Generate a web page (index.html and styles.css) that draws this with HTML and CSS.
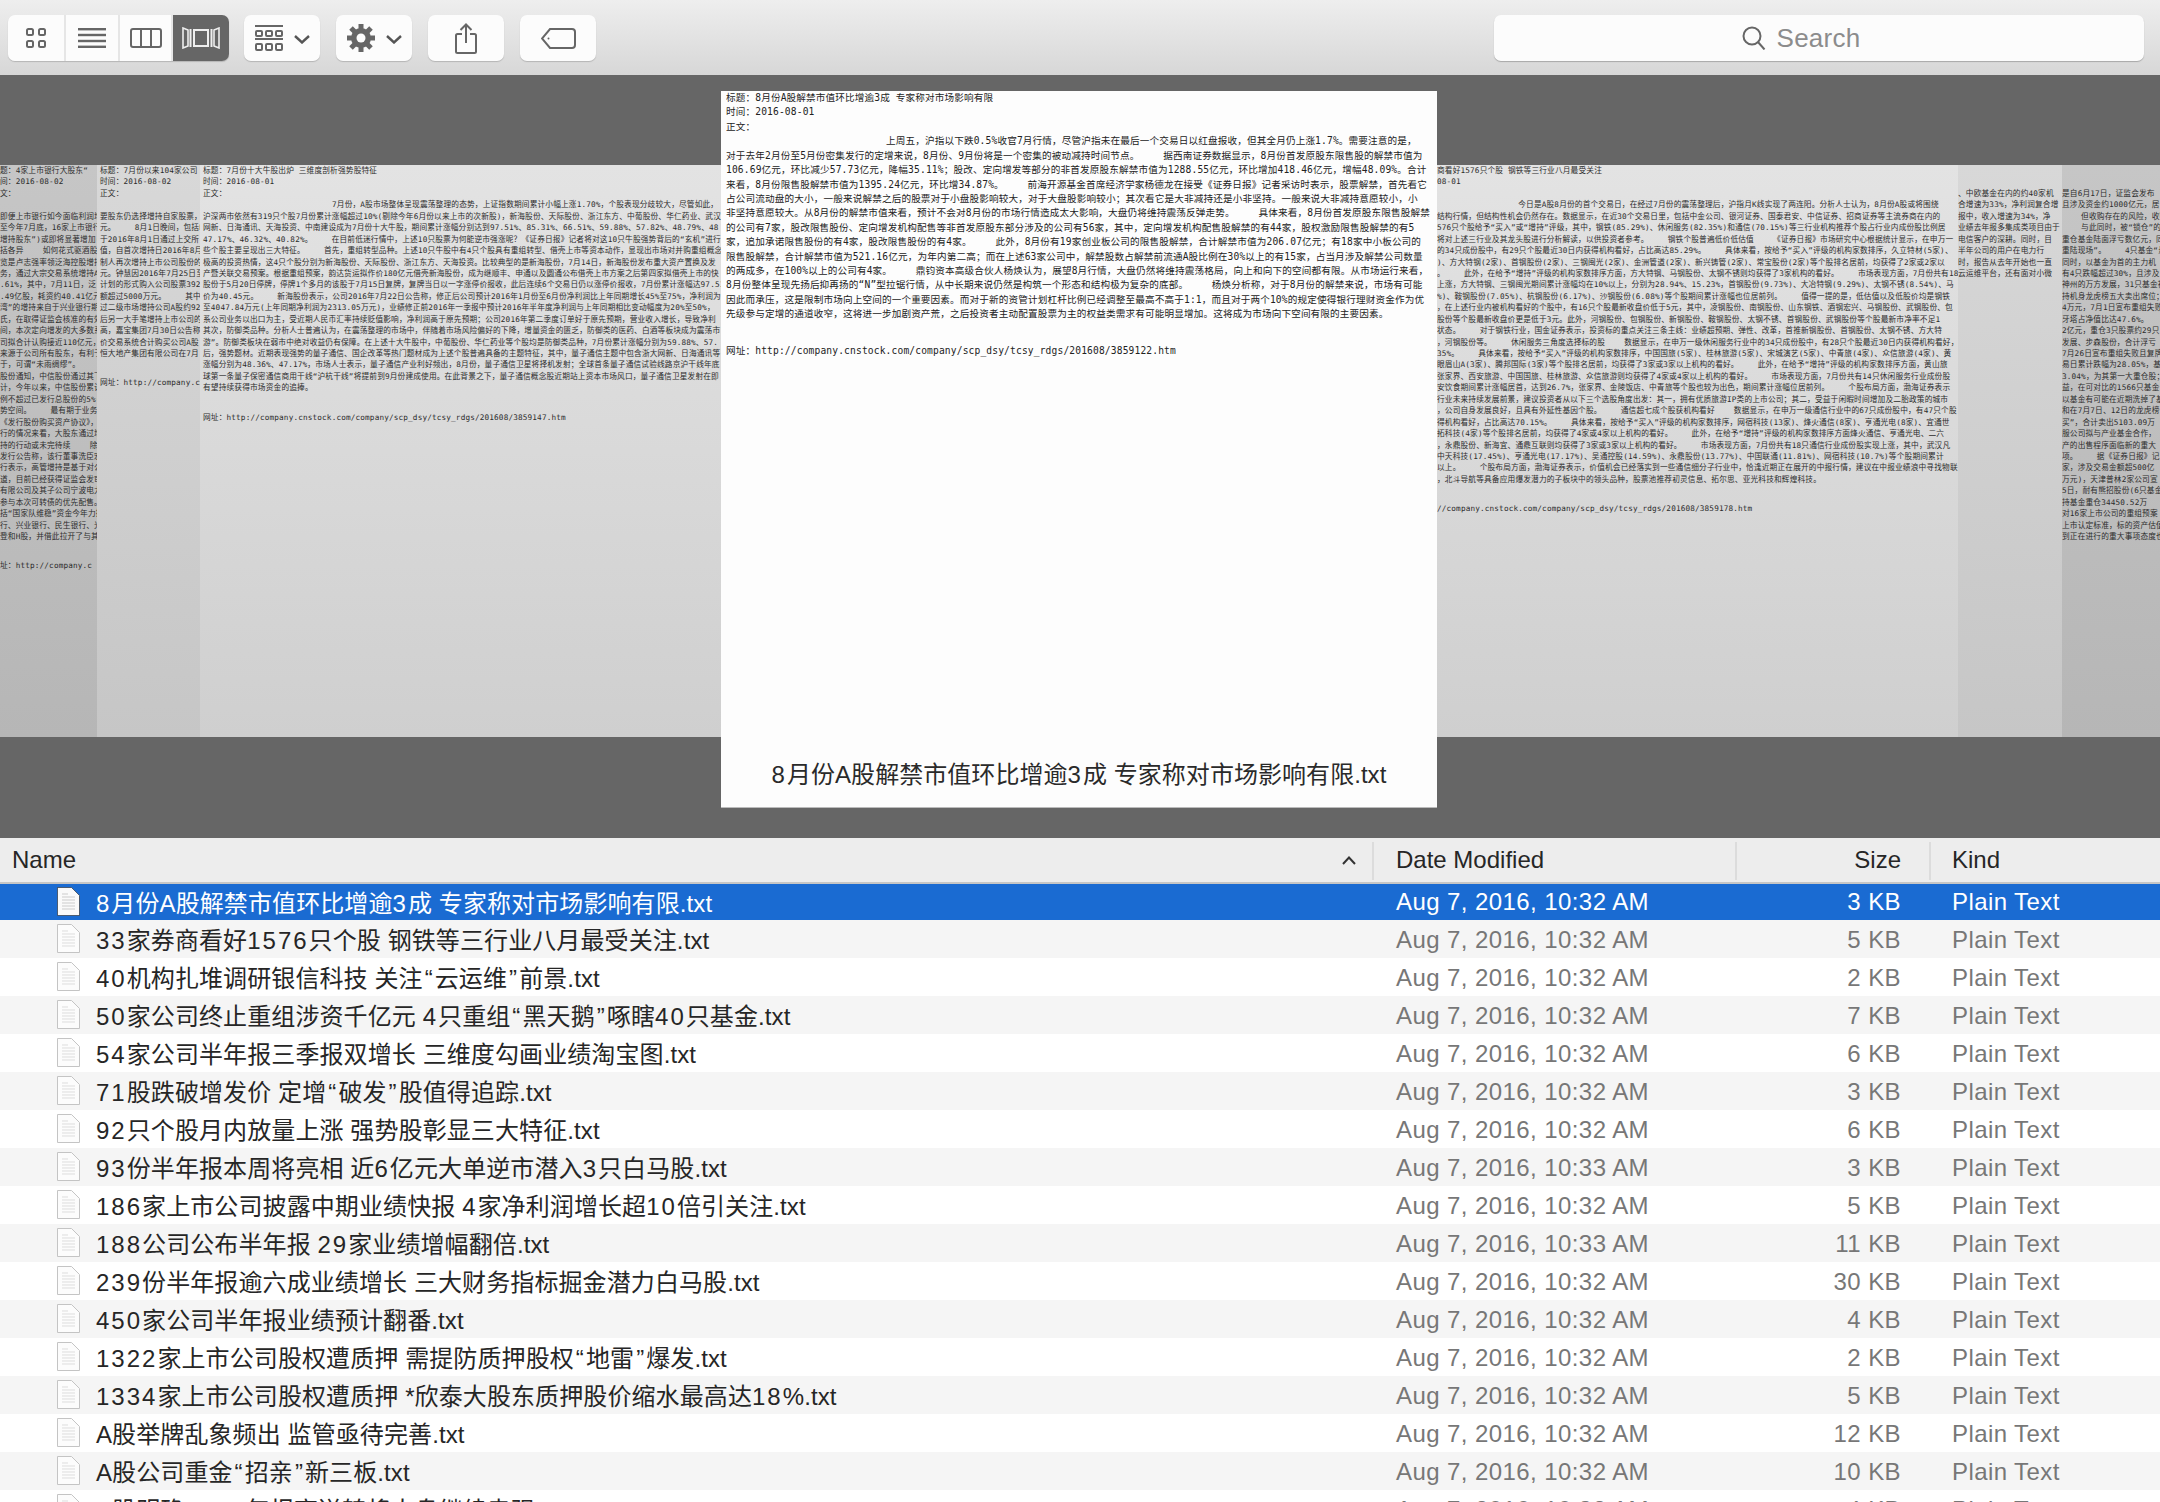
FILE: index.html
```html
<!DOCTYPE html>
<html lang="zh-CN">
<head>
<meta charset="utf-8">
<title>Finder</title>
<link rel="stylesheet" href="styles.css">
</head>
<body>
<svg class="defs" width="0" height="0"><defs><symbol id="doc" viewBox="0 0 23 29"><path d="M.5.500h14l8 8v20H.5z" fill="#fcfcfc" stroke="#c4c4c4"/><path d="M5 10h13M5 13h13M5 16h13M5 19h13M5 22h13M5 7h6" stroke="#ddd"/></symbol></defs></svg>
<div class="window">
  <header class="toolbar">
    <div class="seg">
      <div class="seg-btn w58"><svg width="20" height="20" viewBox="0 0 20 20" fill="none" stroke="#666" stroke-width="2"><rect x="1" y="1" width="6" height="6" rx="1.5"/><rect x="13" y="1" width="6" height="6" rx="1.5"/><rect x="1" y="13" width="6" height="6" rx="1.5"/><rect x="13" y="13" width="6" height="6" rx="1.5"/></svg></div>
      <div class="seg-btn w54"><svg width="28" height="20" viewBox="0 0 28 20" fill="#666"><rect y="0" width="28" height="2.4"/><rect y="5.8" width="28" height="2.4"/><rect y="11.8" width="28" height="2.4"/><rect y="17.6" width="28" height="2.4"/></svg></div>
      <div class="seg-btn w53"><svg width="32" height="20" viewBox="0 0 32 20" fill="none" stroke="#666" stroke-width="2"><rect x="1" y="1" width="30" height="18" rx="2"/><path d="M11 1v18M21 1v18"/></svg></div>
      <div class="seg-btn w56 on"><svg width="38" height="22" viewBox="0 0 38 22" fill="none" stroke="#eee" stroke-width="2"><rect x="12" y="3" width="14" height="16"/><path d="M1 1l5 2v16l-5 2zM37 1l-5 2v16l5 2z" stroke-width="1.6"/><path d="M8.500 2v18M29.500 2v18"/></svg></div>
    </div>
    <div class="btn">
      <svg width="28" height="26" viewBox="0 0 28 26" fill="none" stroke="#666" stroke-width="2"><path d="M0 1h28M0 14h28" /><rect x="1" y="6" width="6" height="5" rx="1"/><rect x="11" y="6" width="6" height="5" rx="1"/><rect x="21" y="6" width="6" height="5" rx="1"/><rect x="1" y="19" width="6" height="6" rx="1"/><rect x="11" y="19" width="6" height="6" rx="1"/><rect x="21" y="19" width="6" height="6" rx="1"/></svg>
      <svg class="chev" width="16" height="9" viewBox="0 0 16 9" fill="none" stroke="#555" stroke-width="2.4"><path d="M1 1l7 6.500 7-6.500"/></svg>
    </div>
    <div class="btn">
      <svg width="28" height="28" viewBox="0 0 28 28"><g stroke="#666" stroke-width="5"><path d="M14 0v28M0 14h28M4 4l20 20M24 4L4 24"/></g><circle cx="14" cy="14" r="10" fill="#666"/><circle cx="14" cy="14" r="4.500" fill="#fcfcfc"/></svg>
      <svg class="chev" width="16" height="9" viewBox="0 0 16 9" fill="none" stroke="#555" stroke-width="2.4"><path d="M1 1l7 6.500 7-6.500"/></svg>
    </div>
    <div class="btn"><svg width="22" height="31" viewBox="0 0 22 31" fill="none" stroke="#666" stroke-width="2"><path d="M7 11H2.500A1.500 1.500 0 0 0 1 12.500v16A1.500 1.500 0 0 0 2.500 30h17a1.500 1.500 0 0 0 1.500-1.500v-16a1.500 1.500 0 0 0-1.500-1.500H15"/><path d="M11 20V1.500M5.500 7L11 1.500 16.500 7"/></svg></div>
    <div class="btn"><svg width="35" height="21" viewBox="0 0 35 21" fill="none" stroke="#666" stroke-width="2"><path d="M9 1h22a3 3 0 0 1 3 3v13a3 3 0 0 1-3 3H9L1 10.500z"/><circle cx="7.500" cy="10.500" r="1" fill="#666" stroke="none"/></svg></div>
    <div class="search">
      <svg width="24" height="24" viewBox="0 0 24 24" fill="none" stroke="#666" stroke-width="2"><circle cx="10" cy="10" r="8.500"/><path d="M16 16l6.500 7.500"/></svg>
      <span>Search</span>
    </div>
  </header>

  <section class="preview">
<div class="pane pane-c1"><pre class="doc">题&#xFF1A;4家上市银行大股东“
间&#xFF1A;2016-08-02
文&#xFF1A;

即便上市银行如今面临利润增
至今年7月底&#xFF0C;16家上市银行
增持股东”)或即将显著增加(
括各异    如何花式驱酒股份
览是卢志强率领泛海控股增持
务&#xFF0C;通过大宗交易系统增持A
.61%&#xFF0C;其中&#xFF0C;7月11日&#xFF0C;泛
.49亿股&#xFF0C;耗资约40.41亿元
湾”的增持来自于兴业银行期
氏&#xFF0C;在取得证监会核准的有效
间&#xFF0C;本次定向增发的大多数系
司拟合计认购接近110亿元&#xFF0C;
来源于公司所有股东&#xFF0C;有利于
于&#xFF0C;可谓“未雨绸缪”。    前
股份通知&#xFF0C;中信股份通过其下
计&#xFF0C;今年以来&#xFF0C;中信股份累计
例不超过已发行总股份的5%(
势空间。    最有期于业务整
《发行股份购买资产协议》&#xFF0C;
行的情况来看&#xFF0C;大股东通过增
持的行动或未完待续    除了
发行公告称&#xFF0C;该行董事洗臣宏
行表示&#xFF0C;高管增持是基于对公
道&#xFF0C;目前已经获得证监会发审
有限公司及其子公司宁波电力
参与本次可转债的优先配售。
括“国家队维稳”资金今年力挺
行、兴业银行、民生银行、光
登和H股&#xFF0C;并借此拉开了与其</pre><pre class="doc url">址&#xFF1A;http://company.c</pre></div>
<div class="pane pane-b1 inset"><pre class="doc">标题&#xFF1A;7月份以来104家公司
时间&#xFF1A;2016-08-02
正文&#xFF1A;

要股东仍选择增持自家股票&#xFF0C;
元。    8月1日晚间&#xFF0C;包括B
于2016年8月1日通过上交所
值&#xFF0C;自首次增持日2016年8月
制人再次增持上市公司股份的
元。钟慧因2016年7月25日至
计划的形式购入公司股票392
额超过5000万元。    其中
过二级市场增持公司A股约92
后另一大手笔增持上市公司的
高&#xFF0C;嘉宝集团7月30日公告称
价交易系统合计购买公司A股
恒大地产集团有限公司在7月</pre><pre class="doc url">网址&#xFF1A;http://company.c</pre></div>
<div class="pane pane-a1 inset"><pre class="doc">标题&#xFF1A;7月份十大牛股出炉 三维度剖析强势股特征
时间&#xFF1A;2016-08-01
正文&#xFF1A;
                           7月份&#xFF0C;A股市场整体呈现震荡整理的态势&#xFF0C;上证指数期间累计小幅上涨1.70%&#xFF0C;个股表现分歧较大&#xFF0C;尽管如此&#xFF0C;
沪深两市依然有319只个股7月份累计涨幅超过10%(剔除今年6月份以来上市的次新股)&#xFF0C;新海股份、天际股份、浙江东方、中葡股份、华仁药业、武汉
网新、日海通讯、天海投资、中南建设成为7月份十大牛股&#xFF0C;期间累计涨幅分别达到97.51%、85.31%、66.51%、59.88%、57.82%、48.79%、48
47.17%、46.32%、40.82%。    在目前低迷行情中&#xFF0C;上述10只股票为何能逆市强涨呢&#xFF1F;《证券日报》记者将对这10只牛股强势背后的“玄机”进行
些个股主要呈现出三大特征。    首先&#xFF0C;重组转型品种。上述10只牛股中有4只个股具有重组转型、借壳上市等资本动作&#xFF0C;显现出市场对并购重组概念
极高的投资热情&#xFF0C;这4只个股分别为新海股份、天际股份、浙江东方、天海投资。比较典型的是新海股份&#xFF0C;7月14日&#xFF0C;新海股份发布重大资产置换及发
产暨关联交易预案。根据重组预案&#xFF0C;韵达货运拟作价180亿元借壳新海股份&#xFF0C;成为继顺丰、申通以及圆通公布借壳上市方案之后第四家拟借壳上市的快
股份于5月20日停牌&#xFF0C;停牌1个多月的该股于7月15日复牌&#xFF0C;复牌当日以一字涨停价报收&#xFF0C;此后连续6个交易日仍以涨停价报收&#xFF0C;7月份累计涨幅达97.51
价为40.45元。    新海股份表示&#xFF0C;公司2016年7月22日公告称&#xFF0C;修正后公司预计2016年1月份至6月份净利润比上年同期增长45%至75%&#xFF0C;净利润为
至4047.84万元(上年同期净利润为2313.05万元)&#xFF0C;业绩修正前2016年一季报中预计2016年半年度净利润与上年同期相比变动幅度为20%至50%&#xFF0C;
系公司业务以出口为主&#xFF0C;受近期人民币汇率持续贬值影响&#xFF0C;净利润高于原先预期&#xFF1B;公司2016年第二季度订单好于原先预期&#xFF0C;营业收入增长&#xFF0C;导致净利
其次&#xFF0C;防御类品种。分析人士普遍认为&#xFF0C;在震荡整理的市场中&#xFF0C;伴随着市场风险偏好的下降&#xFF0C;增量资金的匮乏&#xFF0C;防御类的医药、白酒等板块成为震荡市
游”。防御类板块在弱市中绝对收益仍有保障。在上述十大牛股中&#xFF0C;中葡股份、华仁药业等个股均是防御类品种&#xFF0C;7月份累计涨幅分别为59.88%、57.
后&#xFF0C;强势题材。近期表现强势的量子通信、国企改革等热门题材成为上述个股普遍具备的主题特征&#xFF0C;其中&#xFF0C;量子通信主题中包含浙大网新、日海通讯等
涨幅分别为48.36%、47.17%&#xFF0C;市场人士表示&#xFF0C;量子通信产业利好频出&#xFF0C;8月份&#xFF0C;量子通信卫星将择机发射&#xFF1B;全球首条量子通信试验线路京沪干线年底
球第一条量子保密通信商用干线“沪杭干线”将提前到9月份建成使用。在此背景之下&#xFF0C;量子通信概念股近期站上资本市场风口&#xFF0C;量子通信卫星发射在即
有望持续获得市场资金的追捧。</pre><pre class="doc url">网址&#xFF1A;http://company.cnstock.com/company/scp_dsy/tcsy_rdgs/201608/3859147.htm</pre></div>

<article class="card">
<pre class="doc-main">标题&#xFF1A;8月份A股解禁市值环比增逾3成 专家称对市场影响有限
时间&#xFF1A;2016-08-01
正文&#xFF1A;
                           上周五&#xFF0C;沪指以下跌0.5%收官7月行情&#xFF0C;尽管沪指未在最后一个交易日以红盘报收&#xFF0C;但其全月仍上涨1.7%。需要注意的是&#xFF0C;
对于去年2月份至5月份密集发行的定增来说&#xFF0C;8月份、9月份将是一个密集的被动减持时间节点。    据西南证券数据显示&#xFF0C;8月份首发原股东限售股的解禁市值为
106.69亿元&#xFF0C;环比减少57.73亿元&#xFF0C;降幅35.11%&#xFF1B;股改、定向增发等部分的非首发原股东解禁市值为1288.55亿元&#xFF0C;环比增加418.46亿元&#xFF0C;增幅48.09%。合计
来看&#xFF0C;8月份限售股解禁市值为1395.24亿元&#xFF0C;环比增34.87%。    前海开源基金首席经济学家杨德龙在接受《证券日报》记者采访时表示&#xFF0C;股票解禁&#xFF0C;首先看它
占公司流动盘的大小&#xFF0C;一般来说解禁之后的股票对于小盘股影响较大&#xFF0C;对于大盘股影响较小&#xFF1B;其次看它是大非减持还是小非坚持。一般来说大非减持意愿较小&#xFF0C;小
非坚持意愿较大。从8月份的解禁市值来看&#xFF0C;预计不会对8月份的市场行情造成太大影响&#xFF0C;大盘仍将维持震荡反弹走势。    具体来看&#xFF0C;8月份首发原股东限售股解禁
的公司有7家&#xFF0C;股改限售股份、定向增发机构配售等非首发原股东部分涉及的公司有56家&#xFF0C;其中&#xFF0C;定向增发机构配售股解禁的有44家&#xFF0C;股权激励限售股解禁的有5
家&#xFF0C;追加承诺限售股份的有4家&#xFF0C;股改限售股份的有4家。    此外&#xFF0C;8月份有19家创业板公司的限售股解禁&#xFF0C;合计解禁市值为206.07亿元&#xFF1B;有18家中小板公司的
限售股解禁&#xFF0C;合计解禁市值为521.16亿元&#xFF0C;为年内第二高&#xFF1B;而在上述63家公司中&#xFF0C;解禁股数占解禁前流通A股比例在30%以上的有15家&#xFF0C;占当月涉及解禁公司数量
的两成多&#xFF0C;在100%以上的公司有4家。    鼎钧资本高级合伙人杨焕认为&#xFF0C;展望8月行情&#xFF0C;大盘仍然将维持震荡格局&#xFF0C;向上和向下的空间都有限。从市场运行来看&#xFF0C;
8月份整体呈现先扬后抑再扬的“N”型拉锯行情&#xFF0C;从中长期来说仍然是构筑一个形态和结构极为复杂的底部。    杨焕分析称&#xFF0C;对于8月份的解禁来说&#xFF0C;市场有可能
因此而承压&#xFF0C;这是限制市场向上空间的一个重要因素。而对于新的资管计划杠杆比例已经调整至最高不高于1:1&#xFF0C;而且对于两个10%的规定使得银行理财资金作为优
先级参与定增的通道收窄&#xFF0C;这将进一步加剧资产荒&#xFF0C;之后投资者主动配置股票为主的权益类需求有可能明显增加。这将成为市场向下空间有限的主要因素。</pre>
<pre class="doc-main url-main">网址&#xFF1A;http://company.cnstock.com/company/scp_dsy/tcsy_rdgs/201608/3859122.htm</pre>
<p class="caption"><span class="n">8</span>月份A股解禁市值环比增逾<span class="n">3</span>成 专家称对市场影响有限.txt</p>
</article>

<div class="pane pane-a2"><pre class="doc">商看好1576只个股 钢铁等三行业八月最受关注
08-01

                 今日是A股8月份的首个交易日&#xFF0C;在经过7月份的震荡整理后&#xFF0C;沪指月K线实现了两连阳。分析人士认为&#xFF0C;8月份A股或将围绕
结构行情&#xFF0C;但结构性机会仍然存在。数据显示&#xFF0C;在近30个交易日里&#xFF0C;包括中金公司、银河证券、国泰君安、中信证券、招商证券等主流券商在内的
576只个股给予“买入”或“增持”评级&#xFF0C;其中&#xFF0C;钢铁(85.29%)、休闲服务(82.35%)和通信(70.15%)等三行业机构推荐个股占行业内成份股比例居
将对上述三行业及其龙头股进行分析解读&#xFF0C;以供投资者参考。    钢铁个股普遍低价低估值    《证券日报》市场研究中心根据统计显示&#xFF0C;在申万一
的34只成份股中&#xFF0C;有29只个股最近30日内获得机构看好&#xFF0C;占比高达85.29%。    具体来看&#xFF0C;按给予“买入”评级的机构家数排序&#xFF0C;久立特材(5家)、
)、方大特钢(2家)、首钢股份(2家)、三钢闽光(2家)、金洲管道(2家)、新兴铸管(2家)、常宝股份(2家)等个股排名居前&#xFF0C;均获得了2家或2家以
。    此外&#xFF0C;在给予“增持”评级的机构家数排序方面&#xFF0C;方大特钢、马钢股份、太钢不锈则均获得了3家机构的看好。    市场表现方面&#xFF0C;7月份共有18
上涨&#xFF0C;方大特钢、三钢闽光期间累计涨幅均在10%以上&#xFF0C;分别为28.94%、15.23%&#xFF0C;首钢股份(9.73%)、大冶特钢(9.29%)、太钢不锈(8.54%)、马
%)、鞍钢股份(7.05%)、杭钢股份(6.17%)、沙钢股份(6.08%)等个股期间累计涨幅也位居前列。    值得一提的是&#xFF0C;低估值以及低股价均是钢铁
&#xFF0C;在上述行业内被机构看好的个股中&#xFF0C;有16只个股最新收盘价低于5元&#xFF0C;其中&#xFF0C;凌钢股份、南钢股份、山东钢铁、酒钢宏兴、马钢股份、武钢股份、包
股份等个股最新收盘价更是低于3元。此外&#xFF0C;河钢股份、包钢股份、新钢股份、鞍钢股份、太钢不锈、首钢股份、武钢股份等个股最新市净率不足1
状态。    对于钢铁行业&#xFF0C;国金证券表示&#xFF0C;投资标的重点关注三条主线&#xFF1A;业绩超预期、弹性、改革&#xFF0C;首推新钢股份、首钢股份、太钢不锈、方大特
&#xFF0C;河钢股份等。    休闲服务三角度选择标的股    数据显示&#xFF0C;在申万一级休闲服务行业中的34只成份股中&#xFF0C;有28只个股最近30日内获得机构看好&#xFF0C;
35%。    具体来看&#xFF0C;按给予“买入”评级的机构家数排序&#xFF0C;中国国旅(5家)、桂林旅游(5家)、宋城演艺(5家)、中青旅(4家)、众信旅游(4家)、黄
眼眉山A(3家)、腾邦国际(3家)等个股排名居前&#xFF0C;均获得了3家或3家以上机构的看好。    此外&#xFF0C;在给予“增持”评级的机构家数排序方面&#xFF0C;黄山旅
张家界、西安旅游、中国国旅、桂林旅游、众信旅游则均获得了4家或4家以上机构的看好。    市场表现方面&#xFF0C;7月份共有14只休闲服务行业成份股
安饮食期间累计涨幅居首&#xFF0C;达到26.7%&#xFF0C;张家界、金陵饭店、中青旅等个股也较为出色&#xFF0C;期间累计涨幅位居前列。    个股布局方面&#xFF0C;渤海证券表示
行业未来持续发展前景&#xFF0C;建议投资者从以下三个选股角度出发&#xFF1A;其一&#xFF0C;拥有优质旅游IP类的上市公司&#xFF1B;其二&#xFF0C;受益于闲暇时间增加及二胎政策的城市
&#xFF0C;公司自身发展良好&#xFF0C;且具有外延性基因个股。    通信超七成个股获机构看好    数据显示&#xFF0C;在申万一级通信行业中的67只成份股中&#xFF0C;有47只个股
得机构看好&#xFF0C;占比高达70.15%。    具体来看&#xFF0C;按给予“买入”评级的机构家数排序&#xFF0C;网宿科技(13家)、烽火通信(8家)、亨通光电(8家)、宜通世
拓科技(4家)等个股排名居前&#xFF0C;均获得了4家或4家以上机构的看好。    此外&#xFF0C;在给予“增持”评级的机构家数排序方面烽火通信、亨通光电、二六
&#xFF0C;永鼎股份、新海宜、通鼎互联则均获得了3家或3家以上机构的看好。    市场表现方面&#xFF0C;7月份共有18只通信行业成份股实现上涨&#xFF0C;其中&#xFF0C;武汉凡
中天科技(17.45%)、亨通光电(17.17%)、吴通控股(14.59%)、永鼎股份(13.77%)、中国联通(11.81%)、网宿科技(10.7%)等个股期间累计
以上。    个股布局方面&#xFF0C;渤海证券表示&#xFF0C;价值机会已经落实到一些通信细分子行业中&#xFF0C;恰逢近期正在展开的中报行情&#xFF0C;建议在中报业绩浪中寻找物联
&#xFF0C;北斗导航等具备应用爆发潜力的子板块中的领头品种&#xFF0C;股票池推荐初灵信息、拓尔思、亚光科技和辉煌科技。</pre><pre class="doc url">//company.cnstock.com/company/scp_dsy/tcsy_rdgs/201608/3859178.htm</pre></div>
<div class="pane pane-b2"><pre class="doc">


、中欧基金在内的约40家机
合增速为33%&#xFF0C;净利润复合增
报中&#xFF0C;收入增速为34%&#xFF0C;净
业绩去年报多集成类项目由于
电信客户的深耕。同时&#xFF0C;目
半年公司的用户在电力行
时&#xFF0C;报告从去年开始也一直
云运维平台&#xFF0C;还有面对小微</pre></div>
<div class="pane pane-c2"><pre class="doc">


是自6月17日&#xFF0C;证监会发布
且涉及资金约1000亿元&#xFF0C;居
    但收购存在的风险&#xFF0C;收购标
    与此同时&#xFF0C;被“锁仓”的基金
重仓基金陆面浮亏数亿元&#xFF0C;同
重陆现场”。    4只基金“悬
同时&#xFF0C;以基金为首的主力机
有4只跌幅超过30%&#xFF0C;且涉及
神州的万方发展&#xFF0C;31只基金被
持机身龙虎榜五大卖出席位&#xFF1B;
4万元&#xFF0C;7月1日宣布重组失败
牙塔占净值比达47.6%。
2亿元&#xFF0C;重仓3只股票约29只
发展、步森股份&#xFF0C;合计浮亏
7月26日宣布重组失败且复牌
易日累计跌幅为28.05%&#xFF0C;基
3.04%&#xFF0C;为其第一大重仓股&#xFF1B;
益&#xFF0C;在可对比的1566只基金
以基金有可能在近期洗掉了基
和在7月7日、12日的龙虎榜
买”&#xFF0C;合计卖出5103.09万
服公司拟与产业基金合作&#xFF0C;
产的出售程序面临新的重大
项。    据《证券日报》记
家&#xFF0C;涉及交易金额超500亿
万元)&#xFF0C;天津普林2家公司宣
5日&#xFF0C;耐有熊招股份(6只基金
持基金重仓34450.52万
对16家上市公司的重组预案
上市认定标准&#xFF0C;标的资产估值
到正在进行的重大事项态度也</pre></div>
  </section>

  <section class="list">
    <div class="head">
      <div class="hcell hname"><span>Name</span><svg width="14" height="9" viewBox="0 0 14 9" fill="none" stroke="#333" stroke-width="2"><path d="M1 8l6-6.500L13 8"/></svg></div>
      <div class="hcell hdate">Date Modified</div>
      <div class="hcell hsize">Size</div>
      <div class="hcell hkind">Kind</div>
    </div>
    <div class="row sel"><div class="name"><svg class="file" width="23" height="29" viewBox="0 0 23 29"><path d="M.5.500h14l8 8v20H.5z" fill="#fafafa" stroke="#222" stroke-width=".6"/><path d="M5 10h13M5 13h13M5 16h13M5 19h13M5 22h13M5 7h6" stroke="#ccc"/></svg><span><span class="n">8</span>月份A股解禁市值环比增逾<span class="n">3</span>成 专家称对市场影响有限.txt</span></div><div class="date">Aug 7, 2016, 10:32 AM</div><div class="size">3 KB</div><div class="kind">Plain Text</div></div>
    <div class="row"><div class="name"><svg class="file" width="23" height="29"><use href="#doc"/></svg><span><span class="n">33</span>家券商看好<span class="n">1576</span>只个股 钢铁等三行业八月最受关注.txt</span></div><div class="date">Aug 7, 2016, 10:32 AM</div><div class="size">5 KB</div><div class="kind">Plain Text</div></div>
    <div class="row"><div class="name"><svg class="file" width="23" height="29"><use href="#doc"/></svg><span><span class="n">40</span>机构扎堆调研银信科技 关注<span class="q">“</span>云运维<span class="q">”</span>前景.txt</span></div><div class="date">Aug 7, 2016, 10:32 AM</div><div class="size">2 KB</div><div class="kind">Plain Text</div></div>
    <div class="row"><div class="name"><svg class="file" width="23" height="29"><use href="#doc"/></svg><span><span class="n">50</span>家公司终止重组涉资千亿元 <span class="n">4</span>只重组<span class="q">“</span>黑天鹅<span class="q">”</span>啄瞎<span class="n">40</span>只基金.txt</span></div><div class="date">Aug 7, 2016, 10:32 AM</div><div class="size">7 KB</div><div class="kind">Plain Text</div></div>
    <div class="row"><div class="name"><svg class="file" width="23" height="29"><use href="#doc"/></svg><span><span class="n">54</span>家公司半年报三季报双增长 三维度勾画业绩淘宝图.txt</span></div><div class="date">Aug 7, 2016, 10:32 AM</div><div class="size">6 KB</div><div class="kind">Plain Text</div></div>
    <div class="row"><div class="name"><svg class="file" width="23" height="29"><use href="#doc"/></svg><span><span class="n">71</span>股跌破增发价 定增<span class="q">“</span>破发<span class="q">”</span>股值得追踪.txt</span></div><div class="date">Aug 7, 2016, 10:32 AM</div><div class="size">3 KB</div><div class="kind">Plain Text</div></div>
    <div class="row"><div class="name"><svg class="file" width="23" height="29"><use href="#doc"/></svg><span><span class="n">92</span>只个股月内放量上涨 强势股彰显三大特征.txt</span></div><div class="date">Aug 7, 2016, 10:32 AM</div><div class="size">6 KB</div><div class="kind">Plain Text</div></div>
    <div class="row"><div class="name"><svg class="file" width="23" height="29"><use href="#doc"/></svg><span><span class="n">93</span>份半年报本周将亮相 近<span class="n">6</span>亿元大单逆市潜入<span class="n">3</span>只白马股.txt</span></div><div class="date">Aug 7, 2016, 10:33 AM</div><div class="size">3 KB</div><div class="kind">Plain Text</div></div>
    <div class="row"><div class="name"><svg class="file" width="23" height="29"><use href="#doc"/></svg><span><span class="n">186</span>家上市公司披露中期业绩快报 <span class="n">4</span>家净利润增长超<span class="n">10</span>倍引关注.txt</span></div><div class="date">Aug 7, 2016, 10:32 AM</div><div class="size">5 KB</div><div class="kind">Plain Text</div></div>
    <div class="row"><div class="name"><svg class="file" width="23" height="29"><use href="#doc"/></svg><span><span class="n">188</span>公司公布半年报 <span class="n">29</span>家业绩增幅翻倍.txt</span></div><div class="date">Aug 7, 2016, 10:33 AM</div><div class="size">11 KB</div><div class="kind">Plain Text</div></div>
    <div class="row"><div class="name"><svg class="file" width="23" height="29"><use href="#doc"/></svg><span><span class="n">239</span>份半年报逾六成业绩增长 三大财务指标掘金潜力白马股.txt</span></div><div class="date">Aug 7, 2016, 10:32 AM</div><div class="size">30 KB</div><div class="kind">Plain Text</div></div>
    <div class="row"><div class="name"><svg class="file" width="23" height="29"><use href="#doc"/></svg><span><span class="n">450</span>家公司半年报业绩预计翻番.txt</span></div><div class="date">Aug 7, 2016, 10:32 AM</div><div class="size">4 KB</div><div class="kind">Plain Text</div></div>
    <div class="row"><div class="name"><svg class="file" width="23" height="29"><use href="#doc"/></svg><span><span class="n">1322</span>家上市公司股权遭质押 需提防质押股权<span class="q">“</span>地雷<span class="q">”</span>爆发.txt</span></div><div class="date">Aug 7, 2016, 10:32 AM</div><div class="size">2 KB</div><div class="kind">Plain Text</div></div>
    <div class="row"><div class="name"><svg class="file" width="23" height="29"><use href="#doc"/></svg><span><span class="n">1334</span>家上市公司股权遭质押 *欣泰大股东质押股价缩水最高达<span class="n">18</span>%.txt</span></div><div class="date">Aug 7, 2016, 10:32 AM</div><div class="size">5 KB</div><div class="kind">Plain Text</div></div>
    <div class="row"><div class="name"><svg class="file" width="23" height="29"><use href="#doc"/></svg><span>A股举牌乱象频出 监管亟待完善.txt</span></div><div class="date">Aug 7, 2016, 10:32 AM</div><div class="size">12 KB</div><div class="kind">Plain Text</div></div>
    <div class="row"><div class="name"><svg class="file" width="23" height="29"><use href="#doc"/></svg><span>A股公司重金<span class="q">“</span>招亲<span class="q">”</span>新三板.txt</span></div><div class="date">Aug 7, 2016, 10:32 AM</div><div class="size">10 KB</div><div class="kind">Plain Text</div></div>
    <div class="row"><div class="name"><svg class="file" width="23" height="29"><use href="#doc"/></svg><span>A股明确<span class="n">2016</span>年报高送转将大盘继续走强.txt</span></div><div class="date">Aug 7, 2016, 10:32 AM</div><div class="size">4 KB</div><div class="kind">Plain Text</div></div>
  </section>
</div>
</body>
</html>
```

FILE: styles.css
```css
* { box-sizing: border-box; }
html, body { margin: 0; padding: 0; background: #fff; }
body { font-family: "Liberation Sans", "Noto Sans CJK SC", sans-serif; }
.defs { display: block; height: 0; }

.window { width: 2160px; height: 1502px; display: flex; flex-direction: column; overflow: hidden; }

/* toolbar */
.toolbar {
  height: 75px; flex: none; display: flex; align-items: flex-start; gap: 16px;
  padding: 15px 16px 0 8px;
  background: linear-gradient(#eeeeee, #d7d7d7);
}
.seg { display: flex; width: 221px; height: 46px; flex: none; margin-right: -1px; border-radius: 7px; overflow: hidden; box-shadow: 0 1px 1px #b5b5b5; }
.seg-btn { height: 46px; display: flex; align-items: center; justify-content: center; background: #fcfcfc; border-right: 2px solid #e6e6e6; }
.w58 { width: 58px; }
.w54 { width: 54px; }
.w53 { width: 53px; }
.w56 { width: 56px; }
.seg-btn.on { background: #666; border-right: 0; }
.btn { width: 76px; height: 46px; flex: none; display: flex; align-items: center; justify-content: center; background: #fcfcfc; border-radius: 7px; box-shadow: 0 1px 1px #b5b5b5; }
.chev { margin-left: 11px; margin-top: 2px; }
.search {
  margin-left: auto; width: 650px; height: 46px; flex: none; display: flex; align-items: center; justify-content: center; gap: 11px;
  padding-right: 36px; background: #fcfcfc; border-radius: 7px; box-shadow: 0 1px 1px #a8a8a8;
  font-size: 26px; letter-spacing: .25px; color: #8c8c8c;
}

/* cover flow preview */
.preview { height: 763px; flex: none; background: #666; display: flex; align-items: flex-start; overflow: hidden; }
.pane { height: 572px; margin-top: 90px; flex: none; overflow: hidden; }
.pane-c1 { width: 97px; background: linear-gradient(#c6c6c6, #b6b6b6); }
.pane-b1 { width: 103px; background: linear-gradient(#d8d8d8, #c6c6c6); }
.pane-a1 { width: 521px; background: linear-gradient(#e3e3e3, #cfcfcf); }
.pane-a2 { width: 521px; background: linear-gradient(#e3e3e3, #cfcfcf); }
.pane-b2 { width: 104px; background: linear-gradient(#d8d8d8, #c6c6c6); }
.pane-c2 { width: 98px; background: linear-gradient(#c6c6c6, #b6b6b6); }
.inset { padding-left: 3px; }
.doc { margin: 0; white-space: pre; font: 7.7px/11.44px "DejaVu Sans Mono", "Noto Sans CJK SC", monospace; letter-spacing: .15px; color: #2c2c2c; }
.url { margin-top: 18px; }
.card { width: 716px; height: 716px; margin-top: 16px; flex: none; background: #fdfdfd; padding-left: 5px; display: flex; flex-direction: column; box-shadow: 0 1px 0 #bbb; }
.doc-main { margin: 0; white-space: pre; font: 9.6px/14.42px "DejaVu Sans Mono", "Noto Sans CJK SC", monospace; letter-spacing: .15px; color: #222; overflow: hidden; }
.url-main { margin-top: 22px; }
.caption { margin: auto 0 16px -5px; text-align: center; font-size: 24px; line-height: 32px; color: #2a2a2a; letter-spacing: .05px; }

/* list */
.list { flex: 1; min-height: 0; overflow: hidden; font-size: 24px; }
.head { height: 46px; display: grid; grid-template-columns: 1372px 363px 194px 1fr; background: #ededed; border-bottom: 2px solid #c6c6c6; color: #262626; }
.hcell { border-left: 2px solid #dcdcdc; margin: 4px 0 3px; line-height: 36px; }
.hname { border-left: 0; padding: 0 16px 2px 12px; display: flex; justify-content: space-between; align-items: center; }
.hdate { padding-left: 22px; }
.hsize { text-align: right; padding-right: 28px; }
.hkind { padding-left: 21px; }
.row { height: 38px; display: grid; grid-template-columns: 1372px 363px 194px 1fr; align-items: center; color: #777; letter-spacing: .42px; padding-top: 1px; }
.row:nth-child(odd) { background: #f5f5f5; }
.row:nth-child(even) { background: #fff; }
.row.sel { height: 36px; background: #1a6bd2; color: #fff; padding-top: 0; }
.row.sel .name { color: #fff; }
.name { display: flex; align-items: center; padding: 0 0 2px 57px; gap: 16px; color: #262626; white-space: nowrap; height: 33px; letter-spacing: .1px; }
.file { flex: none; }
.n { letter-spacing: 2px; }
.q { padding: 0 2px; }
.date { padding-left: 24px; }
.size { text-align: right; padding-right: 28px; }
.kind { padding-left: 23px; }
```
